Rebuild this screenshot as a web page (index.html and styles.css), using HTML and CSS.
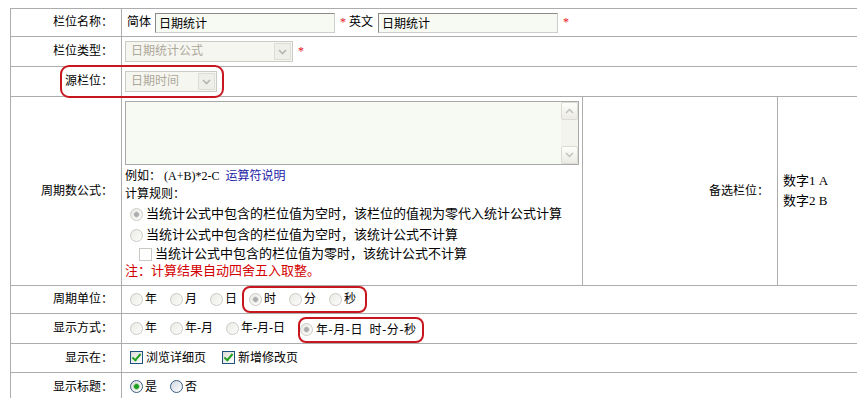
FILE: index.html
```html
<!DOCTYPE html>
<html lang="zh-CN">
<head>
    <meta charset="UTF-8">
    <meta name="viewport" content="width=device-width, initial-scale=1.0">
    <title>栏位设置</title>
    <link rel="stylesheet" href="styles.css">
</head>
<body>
    <div class="wrap">
        <table class="form">
            <colgroup><col class="c1"><col class="c2"><col class="c3"><col class="c4"></colgroup>
            <tr class="r1">
                <td class="lb">栏位名称：</td>
                <td class="fd" colspan="3">
                    <div class="line">
                        <span class="cap">简体</span><input class="txt" type="text" value="日期统计"><span class="req">*</span>
                        <span class="cap cap2">英文</span><input class="txt" type="text" value="日期统计"><span class="req">*</span>
                    </div>
                </td>
            </tr>
            <tr class="r2">
                <td class="lb">栏位类型：</td>
                <td class="fd" colspan="3">
                    <div class="line">
                        <div class="sel w-type"><span class="val">日期统计公式</span><span class="btn"><svg width="9" height="6" viewBox="0 0 9 6"><polyline points="1,1 4.5,4.5 8,1" fill="none" stroke="#b5b5b0" stroke-width="1.6"/></svg></span></div><span class="req">*</span>
                    </div>
                </td>
            </tr>
            <tr class="r3">
                <td class="lb">源栏位：</td>
                <td class="fd" colspan="3">
                    <div class="line">
                        <div class="sel w-src"><span class="val">日期时间</span><span class="btn"><svg width="9" height="6" viewBox="0 0 9 6"><polyline points="1,1 4.5,4.5 8,1" fill="none" stroke="#b5b5b0" stroke-width="1.6"/></svg></span></div>
                    </div>
                </td>
            </tr>
            <tr class="r4">
                <td class="lb">周期数公式：</td>
                <td class="fm">
                    <div class="ta">
                        <textarea></textarea>
                        <div class="sb">
                            <span class="sbb"><svg width="9" height="6" viewBox="0 0 9 6"><polyline points="1,5 4.5,1.5 8,5" fill="none" stroke="#c2c2bc" stroke-width="1.5"/></svg></span>
                            <span class="sbb"><svg width="9" height="6" viewBox="0 0 9 6"><polyline points="1,1 4.5,4.5 8,1" fill="none" stroke="#c2c2bc" stroke-width="1.5"/></svg></span>
                        </div>
                    </div>
                    <div class="ex">例如：&nbsp;(A+B)*2-C&nbsp; <a href="#">运算符说明</a></div>
                    <div class="rule">计算规则：</div>
                    <label class="opt big o1"><input class="rd" type="radio" name="rule" disabled checked>当统计公式中包含的栏位值为空时，该栏位的值视为零代入统计公式计算</label>
                    <label class="opt big o2"><input class="rd" type="radio" name="rule" disabled>当统计公式中包含的栏位值为空时，该统计公式不计算</label>
                    <label class="opt big o3"><input class="ck sub" type="checkbox" disabled>当统计公式中包含的栏位值为零时，该统计公式不计算</label>
                    <div class="note">注：计算结果自动四舍五入取整。</div>
                </td>
                <td class="lb">备选栏位：</td>
                <td class="pick">数字1 A<br>数字2 B</td>
            </tr>
            <tr class="r5">
                <td class="lb">周期单位：</td>
                <td class="fd" colspan="3">
                    <div class="line">
                        <label class="opt"><input class="rd" type="radio" name="unit" disabled>年</label>
                        <label class="opt"><input class="rd" type="radio" name="unit" disabled>月</label>
                        <label class="opt"><input class="rd" type="radio" name="unit" disabled>日</label>
                        <span class="hl hl-unit">
                            <label class="opt"><input class="rd" type="radio" name="unit" disabled checked>时</label>
                            <label class="opt"><input class="rd" type="radio" name="unit" disabled>分</label>
                            <label class="opt"><input class="rd" type="radio" name="unit" disabled>秒</label>
                        </span>
                    </div>
                </td>
            </tr>
            <tr class="r6">
                <td class="lb">显示方式：</td>
                <td class="fd" colspan="3">
                    <div class="line">
                        <label class="opt"><input class="rd" type="radio" name="fmt" disabled>年</label>
                        <label class="opt"><input class="rd" type="radio" name="fmt" disabled>年-月</label>
                        <label class="opt"><input class="rd" type="radio" name="fmt" disabled>年-月-日</label>
                        <span class="hl hl-fmt">
                            <label class="opt"><input class="rd" type="radio" name="fmt" disabled checked>年-月-日&ensp;时-分-秒</label>
                        </span>
                    </div>
                </td>
            </tr>
            <tr class="r7">
                <td class="lb">显示在：</td>
                <td class="fd" colspan="3">
                    <div class="line">
                        <label class="opt chk"><input class="ck" type="checkbox" checked>浏览详细页</label>
                        <label class="opt chk"><input class="ck" type="checkbox" checked>新增修改页</label>
                    </div>
                </td>
            </tr>
            <tr class="r8">
                <td class="lb">显示标题：</td>
                <td class="fd" colspan="3">
                    <div class="line">
                        <label class="opt"><input class="rd on" type="radio" name="title" checked>是</label>
                        <label class="opt"><input class="rd on" type="radio" name="title">否</label>
                    </div>
                </td>
            </tr>
        </table>
        <div class="hl-src"></div>
    </div>
</body>
</html>
```

FILE: styles.css
```css
html,body{margin:0;padding:0;}
body{margin:8px 0 0 10px;font:12px/1.2 "Liberation Serif","Noto Sans CJK SC",serif;color:#000;background:#fff;overflow:hidden;}

.wrap{position:relative;width:860px;}
.form{border-collapse:collapse;table-layout:fixed;width:860px;}
.form td{border:1px solid #acacac;padding:0 3px;vertical-align:middle;}
.c1{width:111px;}
.c2{width:461px;}
.c3{width:195px;}
.c4{width:93px;}
.lb{text-align:right;padding-right:8px !important;}

.r1{height:28px;}
.r2{height:30px;}
.r3{height:30px;}
.r5{height:28px;}
.r6{height:29px;}
.r7{height:29px;}
.r8{height:29px;}

.line{display:flex;align-items:center;}

/* text inputs */
.cap{margin:0 4px 0 2px;}
.cap2{margin:0 5px 0 0;}
.txt{width:180px;height:20px;box-sizing:border-box;margin:0;padding:0 3px;border:1px solid;border-color:#8a8a8a #cdcdcd #cdcdcd #8a8a8a;background:#f7faf3;font:12px "Liberation Serif","Noto Sans CJK SC",serif;color:#000;}
.req{color:#e3101e;margin:0 3px 0 5px;}

/* disabled selects */
.sel{display:flex;height:21px;box-sizing:border-box;border:1px solid #cbcbc5;background:#f6f6f1;color:#aca899;}
.sel .val{flex:1;padding-left:5px;line-height:19px;}
.sel .btn{width:15px;margin:1px;border:1px solid #deded7;background:#efefea;display:flex;align-items:center;justify-content:center;}
.w-type{width:168px;}
.w-src{width:92px;}

/* formula cell */
.fm{vertical-align:top !important;padding:4px 3px 7px !important;}
.ta{display:flex;width:454px;height:64px;box-sizing:border-box;border:1px solid #a9a9a9;background:#f7faf3;margin-bottom:2px;}
.ta textarea{flex:1;border:0;margin:0;padding:2px;background:transparent;resize:none;outline:none;}
.sb{width:17px;display:flex;flex-direction:column;justify-content:space-between;background:#f4f4ef;}
.sbb{height:16px;border:1px solid #dcdcd5;border-radius:2px;background:linear-gradient(#fdfdfb,#ecebe5);display:flex;align-items:center;justify-content:center;}
.ex,.rule{line-height:18px;}
.ex a{color:#1a1aa6;text-decoration:none;}
.big{font-size:13px;}
.o1{display:flex;height:22px;}
.o2{display:flex;height:20px;}
.o3{display:flex;height:18px;}
.note{font-size:13px;line-height:14px;color:#d40000;}
.pick{padding-left:5px !important;line-height:20px;font-size:13px;}

/* radios & checkboxes */
.opt{display:inline-flex;align-items:center;margin-right:8px;}
.big.opt{margin-right:0;}
.rd{-webkit-appearance:none;appearance:none;flex:none;width:13px;height:13px;margin:0 2px 0 5px;border:1px solid #cbcbc5;border-radius:50%;background:linear-gradient(135deg,#e9e9e4,#fdfdfc);}
.big .rd{margin-right:3px;}
.rd:checked{background:radial-gradient(circle,#acacac 0 2px,#dadada 2.6px,transparent 3.6px),linear-gradient(135deg,#e9e9e4,#fdfdfc);}
.rd.on{border-color:#3b5f83;background:linear-gradient(135deg,#d0d7e0,#fff);}
.rd.on:checked{background:radial-gradient(circle,#1e9b1e 0 2px,#86cf86 2.6px,transparent 3.6px),linear-gradient(135deg,#dadad4,#fff);}
.ck{-webkit-appearance:none;appearance:none;position:relative;flex:none;width:13px;height:13px;margin:0 3px 0 5px;border:1px solid #1c5180;background:linear-gradient(135deg,#dcdcd7,#fff);}
.ck:checked::after{content:"";position:absolute;left:3px;top:0;width:3px;height:7px;border:solid #21a121;border-width:0 2px 2px 0;transform:rotate(40deg);}
.ck.sub{margin-left:14px;border-color:#c9c9c3;background:#fff;}
.chk{margin-right:11px;}

/* red annotation marks */
.hl{display:inline-flex;align-items:center;box-sizing:border-box;border:2px solid #c8161e;border-radius:8px;}
.hl .opt:last-child{margin-right:0;}
.hl-unit{height:27px;margin-left:-3px;padding-right:9px;}
.hl-fmt{height:26px;margin:3px 0 0 5px;padding-right:5px;}
.hl-fmt .opt{letter-spacing:.6px;}
.hl-fmt .rd{margin-left:0;margin-right:3px;}
.hl-src{position:absolute;left:50px;top:57px;width:164px;height:33px;box-sizing:border-box;border:2px solid #c8161e;border-radius:9px;}
```
